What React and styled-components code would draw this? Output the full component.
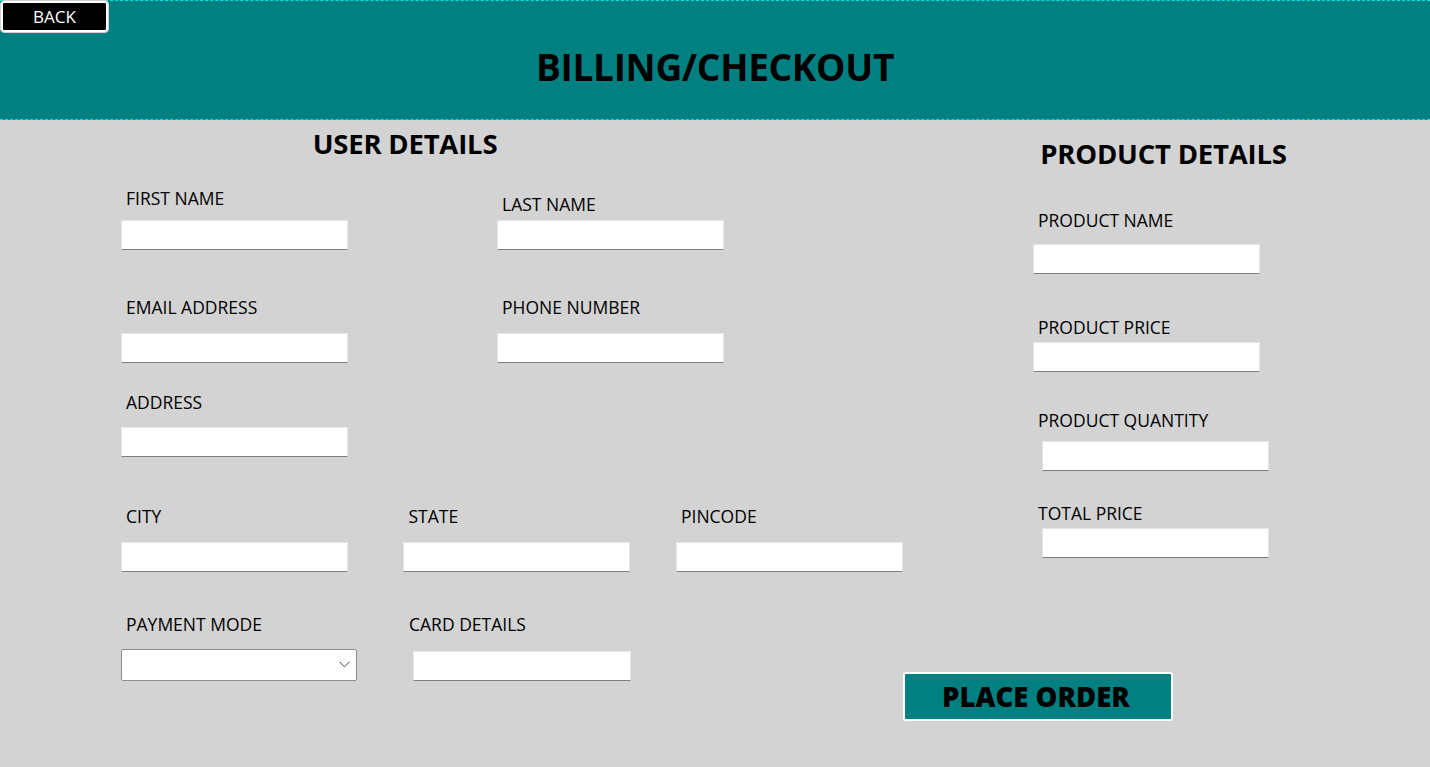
import React from 'react';
import styled, { createGlobalStyle } from 'styled-components';

const GlobalStyle = createGlobalStyle`
  html, body {
    margin: 0;
    padding: 0;
    background: #d3d3d3;
  }
  body {
    font-family: "Open Sans", "Noto Sans", sans-serif;
    color: #000;
  }
`;

const Page = styled.div`
  position: relative;
  min-height: 100vh;
  background: #d3d3d3;
`;

const Header = styled.header`
  box-sizing: border-box;
  height: 120px;
  background: #008080;
  border-top: 1px dashed #00e4e4;
  border-bottom: 1px dashed #00e4e4;
  display: flex;
  justify-content: center;
  padding-top: 47px;
`;

const PageTitle = styled.h1`
  margin: 0;
  font-size: 37px;
  line-height: 37px;
  font-weight: 700;
  letter-spacing: -0.3px;
`;

const BackButton = styled.button`
  position: absolute;
  top: 1px;
  left: 1px;
  width: 107px;
  height: 31px;
  box-sizing: border-box;
  background: #000;
  color: #fff;
  border: 2px solid #fff;
  border-radius: 3px;
  outline: 1px solid #d3d3d3;
  font-family: "Open Sans", sans-serif;
  font-size: 17px;
  line-height: 1;
  padding: 0;
  cursor: pointer;
`;

const Main = styled.main`
  display: grid;
  grid-template-columns: 782px 1fr;
  padding: 1px 0 0 121px;
`;

const Column = styled.section`
  display: flex;
  flex-direction: column;
`;

const SectionTitle = styled.h2`
  box-sizing: border-box;
  margin: 0;
  height: ${(p) => p.$h}px;
  padding-top: ${(p) => p.$top}px;
  padding-right: ${(p) => p.$nudge || 0}px;
  width: ${(p) => p.$w};
  text-align: center;
  font-size: 27.5px;
  line-height: 1;
  font-weight: 700;
  letter-spacing: -0.2px;
`;

const Row = styled.div`
  display: flex;
  align-items: flex-end;
  height: ${(p) => p.$h}px;
  padding-left: ${(p) => p.$pad || 0}px;
`;

const Field = styled.div`
  display: flex;
  flex-direction: column;
  width: ${(p) => (p.$slot ? `${p.$slot}px` : 'auto')};
`;

const Label = styled.label`
  font-size: 17.5px;
  line-height: 17px;
  padding-left: 5px;
  margin-bottom: ${(p) => p.$gap}px;
  white-space: nowrap;
`;

const TextBox = styled.input`
  box-sizing: border-box;
  width: ${(p) => p.$w || 227}px;
  height: 30px;
  margin: 0 0 0 ${(p) => p.$shift || 0}px;
  padding: 0 4px;
  background: #fff;
  border: 1px solid #e6e6e6;
  border-bottom-color: #7f7f7f;
  border-radius: 0;
  outline: none;
  font-family: "Open Sans", sans-serif;
  font-size: 15px;
`;

const ComboWrap = styled.div`
  position: relative;
  width: 236px;
  height: 32px;
`;

const Combo = styled.select`
  box-sizing: border-box;
  width: 100%;
  height: 100%;
  margin: 0;
  appearance: none;
  background: #fff;
  border: 1px solid #8c8c8c;
  border-radius: 2px;
  outline: none;
  font-family: "Open Sans", sans-serif;
  font-size: 15px;
`;

const Chevron = styled.svg`
  position: absolute;
  right: 7px;
  top: 12px;
  pointer-events: none;
`;

const OrderButton = styled.button`
  box-sizing: border-box;
  align-self: flex-start;
  margin-top: 114px;
  width: 270px;
  height: 49px;
  background: #008080;
  border: 2px solid #fff;
  border-radius: 3px;
  color: #000;
  font-family: "Open Sans", sans-serif;
  font-size: 27.5px;
  font-weight: 800;
  line-height: 1;
  padding: 0 4px 0 0;
  cursor: pointer;
`;

const userRows = [
  {
    h: 89,
    fields: [
      { label: 'FIRST NAME', gap: 13, slot: 376 },
      { label: 'LAST NAME', gap: 7 },
    ],
  },
  {
    h: 113,
    fields: [
      { label: 'EMAIL ADDRESS', gap: 17, slot: 376 },
      { label: 'PHONE NUMBER', gap: 17 },
    ],
  },
  { h: 94, fields: [{ label: 'ADDRESS', gap: 16 }] },
  {
    h: 115,
    fields: [
      { label: 'CITY', gap: 17, slot: 283 },
      { label: 'STATE', gap: 17, slot: 273 },
      { label: 'PINCODE', gap: 17 },
    ],
  },
];

const productFields = [
  { label: 'PRODUCT NAME', h: 103, gap: 15, shift: 0 },
  { label: 'PRODUCT PRICE', h: 98, gap: 6, shift: 0 },
  { label: 'PRODUCT QUANTITY', h: 99, gap: 12, shift: 9 },
  { label: 'TOTAL PRICE', h: 87, gap: 6, shift: 9 },
];

const App = () => {
  return (
    <Page>
      <GlobalStyle />
      <Header>
        <PageTitle>BILLING/CHECKOUT</PageTitle>
      </Header>
      <BackButton type="button">BACK</BackButton>

      <Main>
        <Column>
          <SectionTitle $h={40} $top={9} $w="568px">
            USER DETAILS
          </SectionTitle>
          {userRows.map((row, i) => (
            <Row key={i} $h={row.h}>
              {row.fields.map((f) => (
                <Field key={f.label} $slot={f.slot}>
                  <Label $gap={f.gap}>{f.label}</Label>
                  <TextBox type="text" />
                </Field>
              ))}
            </Row>
          ))}
          <Row $h={109}>
            <Field $slot={283}>
              <Label $gap={16}>PAYMENT MODE</Label>
              <ComboWrap>
                <Combo defaultValue="">
                  <option value=""></option>
                  <option value="card">CARD</option>
                  <option value="cash">CASH</option>
                </Combo>
                <Chevron width="11" height="7" viewBox="0 0 11 7">
                  <path d="M0.5 0.8 L5.5 5.8 L10.5 0.8" fill="none" stroke="#444" strokeWidth="1" />
                </Chevron>
              </ComboWrap>
            </Field>
            <Field>
              <Label $gap={18}>CARD DETAILS</Label>
              <TextBox type="text" $w={218} $shift={9} />
            </Field>
          </Row>
        </Column>

        <Column>
          <SectionTitle $h={50} $top={19} $w="100%" $nudge={6}>
            PRODUCT DETAILS
          </SectionTitle>
          {productFields.map((f) => (
            <Row key={f.label} $h={f.h} $pad={130}>
              <Field>
                <Label $gap={f.gap}>{f.label}</Label>
                <TextBox type="text" $shift={f.shift} />
              </Field>
            </Row>
          ))}
          <OrderButton type="button">PLACE ORDER</OrderButton>
        </Column>
      </Main>
    </Page>
  );
};

export default App;
